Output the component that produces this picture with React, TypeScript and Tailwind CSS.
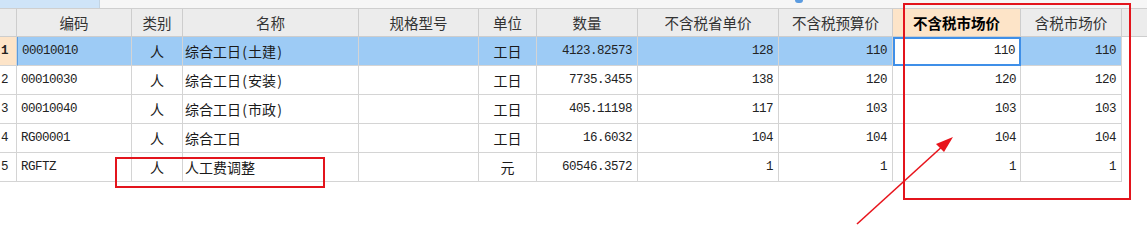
const cols =
  'grid grid-cols-[17px_115px_51px_176px_120px_58px_101px_141px_114px_128px_101px_1fr]';

const headers = ['', '编码', '类别', '名称', '规格型号', '单位', '数量', '不含税省单价', '不含税预算价', '不含税市场价', '含税市场价'];

type Row = {
  code: string;
  kind: string;
  name: string;
  spec: string;
  unit: string;
  qty: string;
  p1: string;
  p2: string;
  p3: string;
  p4: string;
};

const rows: Row[] = [
  { code: '00010010', kind: '人', name: '综合工日(土建)', spec: '', unit: '工日', qty: '4123.82573', p1: '128', p2: '110', p3: '110', p4: '110' },
  { code: '00010030', kind: '人', name: '综合工日(安装)', spec: '', unit: '工日', qty: '7735.3455', p1: '138', p2: '120', p3: '120', p4: '120' },
  { code: '00010040', kind: '人', name: '综合工日(市政)', spec: '', unit: '工日', qty: '405.11198', p1: '117', p2: '103', p3: '103', p4: '103' },
  { code: 'RG00001', kind: '人', name: '综合工日', spec: '', unit: '工日', qty: '16.6032', p1: '104', p2: '104', p3: '104', p4: '104' },
  { code: 'RGFTZ', kind: '人', name: '人工费调整', spec: '', unit: '元', qty: '60546.3572', p1: '1', p2: '1', p3: '1', p4: '1' },
];

const cjk = "font-['Noto_Sans_CJK_SC',sans-serif]";
const mono = "font-['Liberation_Mono','Noto_Sans_CJK_SC',monospace] text-[12.5px] tracking-[-0.5px] text-[#222]";
const cell = 'flex items-center border-r border-b border-[#d4d4d4] overflow-hidden whitespace-nowrap';

// half-width parens as in the grid's song-style font
function Name({ text }: { text: string }) {
  const parts = text.split(/([()])/);
  return (
    <>
      {parts.map((p, i) =>
        p === '(' || p === ')' ? (
          <span key={i} className="inline-block w-[7px] text-center">
            {p}
          </span>
        ) : (
          <span key={i}>{p}</span>
        )
      )}
    </>
  );
}

export default function App() {
  return (
    <div className="relative w-[1147px] h-[242px] bg-white text-[#1a1a1a] overflow-hidden">
      {/* top tab strip */}
      <div className="flex h-[9px] border-b border-[#cfcfcf] bg-[#f6f6f6]">
        <div className="w-[100px] bg-[#cfe4f8] border-r border-[#c4d4e2]" />
        <div className="ml-[695px] w-[8px] h-[3px] rounded-b-sm bg-[#5b9be0]" />
      </div>

      {/* header */}
      <div className={`${cols} h-[28px] bg-[#ececec] ${cjk} text-[14.5px] text-[#333]`}>
        {headers.map((h, i) => (
          <div
            key={i}
            className={`flex items-center justify-center border-r border-b border-[#cdcdcd] ${
              i === 9 ? 'bg-[#fde4c8] font-bold text-black' : ''
            }`}
          >
            {h}
          </div>
        ))}
        <div className="border-b border-[#cdcdcd]" />
      </div>

      {/* body */}
      {rows.map((r, i) => {
        const sel = i === 0;
        const bg = sel ? 'bg-[#9dcbf5]' : 'bg-white';
        return (
          <div key={i} className={`${cols} h-[29px]`}>
            <div className={`${cell} ${mono} pl-[1px] ${sel ? 'bg-[#fde4c8] font-bold' : 'bg-white'}`}>{i + 1}</div>
            <div className={`${cell} ${mono} pl-[4px] ${bg} ${sel ? 'border-l border-l-[#5c9de0]' : ''}`}>{r.code}</div>
            <div className={`${cell} ${cjk} text-[14px] justify-center ${bg}`}>{r.kind}</div>
            <div className={`${cell} ${cjk} text-[14px] pl-[2px] ${bg}`}>
              <Name text={r.name} />
            </div>
            <div className={`${cell} ${bg}`}>{r.spec}</div>
            <div className={`${cell} ${cjk} text-[14px] justify-center ${bg}`}>{r.unit}</div>
            <div className={`${cell} ${mono} justify-end pr-[5px] ${bg}`}>{r.qty}</div>
            <div className={`${cell} ${mono} justify-end pr-[5px] ${bg}`}>{r.p1}</div>
            <div className={`${cell} ${mono} justify-end pr-[5px] ${bg}`}>{r.p2}</div>
            {sel ? (
              <div className={`flex items-center justify-end pr-[4px] ${mono} bg-white border-2 border-[#3f8fe8]`}>{r.p3}</div>
            ) : (
              <div className={`${cell} ${mono} justify-end pr-[4px] bg-white`}>{r.p3}</div>
            )}
            <div className={`${cell} ${mono} justify-end pr-[5px] ${bg}`}>{r.p4}</div>
            <div className="bg-white" />
          </div>
        );
      })}

      {/* annotations */}
      <div className="absolute left-[903px] top-[3px] w-[228px] h-[197px] border-2 border-[#e3141c]" />
      <div className="absolute left-[115px] top-[157px] w-[210px] h-[31px] border-2 border-[#e3141c]" />
      <svg className="absolute left-0 top-0" width="1147" height="242">
        <line x1="857" y1="224" x2="945" y2="144" stroke="#e8141c" strokeWidth="1.6" />
        <polygon points="953,137 936,144 944,152" fill="#e8141c" />
      </svg>
    </div>
  );
}
